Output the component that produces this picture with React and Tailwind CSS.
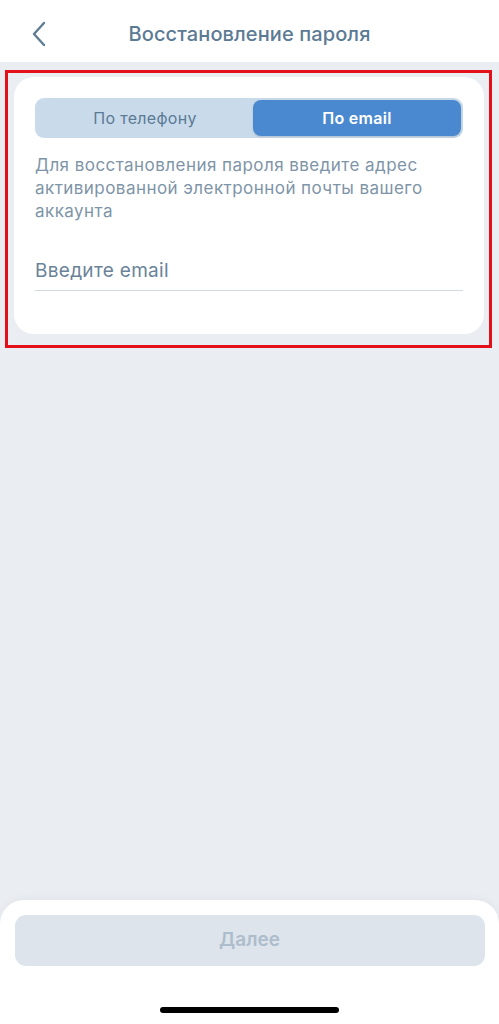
import React, { useState } from "react";

const font = { fontFamily: "Inter, 'Noto Sans', sans-serif" };

const App = () => {
  const [mode, setMode] = useState("email");

  return (
    <div style={font} className="w-[499px] h-[1024px] bg-[#eaeef3] flex flex-col overflow-hidden">
      {/* Header */}
      <div className="h-[62px] bg-white flex items-center relative shrink-0">
        <button className="absolute left-[27px] top-[17px] p-1">
          <svg width="16" height="26" viewBox="0 0 16 26" fill="none">
            <path d="M13 2 L3 13 L13 24" stroke="#5e7d96" strokeWidth="2.4" strokeLinecap="round" strokeLinejoin="round" />
          </svg>
        </button>
        <h1 className="w-full text-center text-[20px] font-medium tracking-[0.1px] text-[#5b7a94] mt-[6px]">
          Восстановление пароля
        </h1>
      </div>

      {/* Content */}
      <div className="flex-1">
        <div className="mt-[8px] ml-[5px] mr-[7px] border-[3px] border-[#e3101a] pt-[4px] pl-[6px] pr-[5px] pb-[11px]">
          <div className="bg-white rounded-[20px] px-[21px] pt-[21px] pb-[43px]">
            {/* Segmented control */}
            <div className="h-[40px] bg-[#c9dbeb] rounded-[9px] p-[2px] flex">
              <button
                onClick={() => setMode("phone")}
                className={`w-[216px] rounded-[8px] text-[16px] tracking-[0.3px] ${mode === "phone" ? "bg-[#4a89d0] text-white font-semibold" : "text-[#5b7a94]"}`}
              >
                По телефону
              </button>
              <button
                onClick={() => setMode("email")}
                className={`flex-1 rounded-[8px] text-[16px] tracking-[0.3px] ${mode === "email" ? "bg-[#4a89d0] text-white font-semibold shadow-sm" : "text-[#5b7a94]"}`}
              >
                По email
              </button>
            </div>

            {/* Hint */}
            <p className="mt-[16px] text-[17px] leading-[23px] tracking-[0.45px] text-[#7e94a7]">
              Для восстановления пароля введите адрес активированной электронной почты вашего аккаунта
            </p>

            {/* Email input */}
            <div className="mt-[36px] border-b border-[#d3dbe1] pb-[7px]">
              <input
                type="email"
                placeholder="Введите email"
                className="w-full h-[24px] text-[19px] tracking-[0.3px] text-[#4d6a82] placeholder:text-[#6a8399] outline-none bg-transparent"
              />
            </div>
          </div>
        </div>
      </div>

      {/* Bottom sheet */}
      <div className="h-[124px] bg-white rounded-t-[24px] shadow-[0_-2px_8px_rgba(0,0,0,0.04)] shrink-0 flex flex-col items-center">
        <button
          disabled
          className="mt-[15px] w-[470px] h-[51px] rounded-[11px] bg-[#dde4eb] text-[19px] font-semibold text-[#aebdcc]"
        >
          Далее
        </button>
        <div className="mt-[41px] w-[179px] h-[6px] rounded-full bg-black" />
      </div>
    </div>
  );
};

export default App;
